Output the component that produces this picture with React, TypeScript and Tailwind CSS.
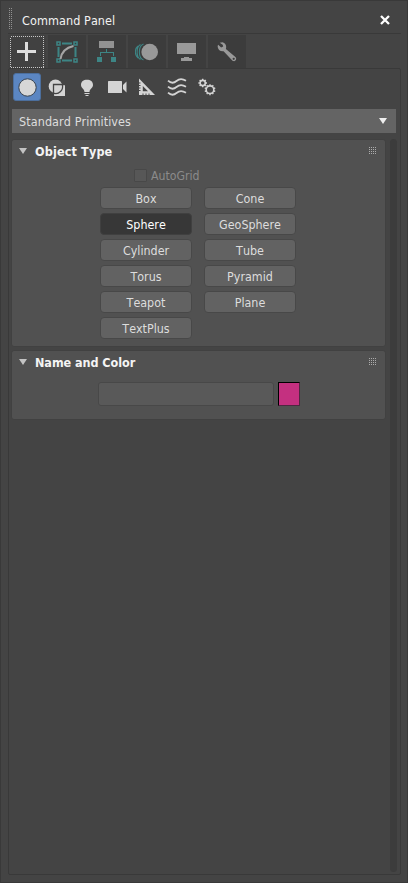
import React from "react";

const teal = "#3d8585";
const pale = "#d4d4d4";

function Grip() {
  return (
    <svg width="9" height="8" viewBox="0 0 9 8" shapeRendering="crispEdges">
      {[0, 2, 4, 6].map((y) =>
        [0, 2, 4, 6].map((x) => <rect key={`${x}-${y}`} x={x} y={y} width="1" height="1" fill="#acacac" />)
      )}
    </svg>
  );
}

function Rollout({ title, className, titleClass, children }: { title: string; className: string; titleClass: string; children: React.ReactNode }) {
  return (
    <section className={`w-[375px] rounded-[3px] border border-[#414141] bg-[#515151] ${className}`}>
      <header className="flex h-[22px] items-center pl-[7px] pr-[7px]">
        <svg width="8" height="6" viewBox="0 0 8 6"><path d="M0 0H8L4 6Z" fill="#c3c3c3" /></svg>
        <h2 className={`ml-2 pt-[2px] text-[12.5px] font-bold leading-[16px] text-[#f4f4f4] ${titleClass}`}>{title}</h2>
        <span className="ml-auto"><Grip /></span>
      </header>
      {children}
    </section>
  );
}

function Tab({ children }: { children: React.ReactNode }) {
  return <button className="flex h-[33px] w-[38px] items-center justify-center bg-[#3c3c3c]">{children}</button>;
}

function Gear({ x, y, r, n }: { x: number; y: number; r: number; n: number }) {
  return (
    <g transform={`translate(${x} ${y})`} stroke={pale} fill="none">
      <circle r={r} strokeWidth="1.6" />
      {Array.from({ length: n }, (_, i) => (
        <path key={i} d={`M0 ${-r - 0.3}V${-r - 1.7}`} strokeWidth="1.4" transform={`rotate(${(i * 360) / n})`} />
      ))}
    </g>
  );
}

const primitives = ["Box", "Cone", "Sphere", "GeoSphere", "Cylinder", "Tube", "Torus", "Pyramid", "Teapot", "Plane", "TextPlus"];

export default function App() {
  return (
    <main className="flex h-[883px] w-[408px] flex-col overflow-hidden border border-[#393939] bg-[#444444] px-[7px] pt-[2px] font-['DejaVu_Sans_Condensed','DejaVu_Sans',sans-serif] text-[12.4px] text-[#dddddd] [font-kerning:none] [font-stretch:condensed]">
      <div className="flex h-[31px] w-[393px] shrink-0 items-center border-b border-[#393939]">
        <svg className="ml-[1px]" width="4" height="21" viewBox="0 0 4 21" shapeRendering="crispEdges">
          <path d="M.5 0V21M2.5 0V21" stroke="#929292" strokeDasharray="1 1" />
        </svg>
        <h1 className="ml-[9px] mt-[5px] text-[12.5px] leading-[16px] tracking-[0.08px] text-[#f2f2f2]">Command Panel</h1>
        <button className="ml-auto mr-[11px] mt-[4px]">
          <svg width="10" height="10" viewBox="0 0 10 10"><path d="M1 1L9 9M9 1L1 9" stroke="#fff" strokeWidth="2.3" /></svg>
        </button>
      </div>

      <nav className="mt-px flex h-[33px] shrink-0 gap-[2px]">
        <div className="h-[33px] w-[38px] bg-[#414141] pl-[2px] pt-px">
          <button className="flex h-[32px] w-[34px] items-center justify-center">
            <svg width="34" height="32" viewBox="0 0 34 32" shapeRendering="crispEdges">
              <rect x=".5" y=".5" width="33" height="31" fill="none" stroke="#c7c7c7" strokeDasharray="1 1" />
              <path d="M7 14H26V17H7ZM15 6H18V25H15Z" fill="#dddddd" />
            </svg>
          </button>
        </div>
        <Tab>
          <svg width="22" height="22" viewBox="0 0 22 22" fill="none">
            <path d="M6 2.5H16M2.5 6V16M19.5 6V16M6 19.5H16" stroke={teal} strokeWidth="2" />
            <path d="M1 1H4V4H1ZM18 1H21V4H18ZM1 18H4V21H1ZM18 18H21V21H18Z" stroke={teal} strokeWidth="1.5" />
            <path d="M4.5 18Q6 7.5 17.5 5" stroke="#a5a5a5" strokeWidth="2" />
          </svg>
        </Tab>
        <Tab>
          <svg width="20" height="21" viewBox="0 0 20 21" shapeRendering="crispEdges">
            <path d="M2 0H17V7H2Z" fill="#929292" />
            <path d="M9.5 8V11M3.5 15V11.5H16.5V15" stroke={teal} fill="none" />
            <path d="M0 16H5V21H0ZM14 16H19V21H14Z" fill={teal} />
          </svg>
        </Tab>
        <Tab>
          <svg width="24" height="18" viewBox="0 0 24 18">
            <circle cx="14.7" cy="9" r="8.3" fill="#999" />
            <path d="M8.5 1C3 3 3 15 8.5 17M5.5 1.5C1 4 1 14 5.5 16.5M3 3C-.5 6 -.5 12 3 15" fill="none" stroke={teal} strokeWidth="1.1" />
          </svg>
        </Tab>
        <Tab>
          <svg width="20" height="18" viewBox="0 0 20 18" shapeRendering="crispEdges"><path d="M0 0H19V11H0ZM7 14H12V15H15V18H4V15H7Z" fill="#999" /></svg>
        </Tab>
        <Tab>
          <svg width="20" height="20" viewBox="0 0 20 20">
            <path d="M2.7 .8L5.6 .2Q9 1.2 9.2 5L8.9 7L18.7 15.3Q20.2 18.2 17.2 19.3L15.5 18.8L6.6 9.2Q.8 9.5 .6 4L1.2 2.7L4.1 5.5L6.2 4.4L5.7 2.7Z" fill="#999" />
            <circle cx="16.7" cy="16.8" r="1.1" fill="#3c3c3c" />
          </svg>
        </Tab>
      </nav>

      <div className="flex h-[807px] w-[393px] shrink-0 flex-col rounded-[2px] border border-[#393939] px-[3px]">
        <nav className="mt-[4px] flex h-[29px] shrink-0 gap-[1px]">
          <button className="ml-px flex h-[28px] w-[28px] items-center justify-center rounded-[3px] border border-[#4c6f9d] bg-[#5b86c2]">
            <svg width="20" height="20" viewBox="0 0 20 20"><circle cx="10.5" cy="10.5" r="8.7" fill="#d7d7d7" stroke="#35414f" /></svg>
          </button>
          <button className="flex w-[29px] items-center justify-center">
            <svg width="18" height="18" viewBox="0 0 18 18">
              <circle cx="7.5" cy="7.3" r="6.8" fill={pale} />
              <path d="M5.5 5.5H17V17H5.5Z" fill={pale} />
              <path d="M5.5 17.5V5.5H17.5M14.3 5.5A7 7 0 0 1 5.5 14.2" fill="none" stroke="#444" strokeWidth="1.3" />
            </svg>
          </button>
          <button className="flex w-[29px] items-center justify-center">
            <svg width="14" height="18" viewBox="0 0 14 18">
              <path d="M1 6C1 2.5 3.5 .8 7 .8S13 2.5 13 6C13 9 9.5 10 9.5 13H4.5C4.5 10 1 9 1 6Z" fill={pale} />
              <path d="M4.5 14.5H9.5M5.5 16.5H8.5" stroke={pale} />
            </svg>
          </button>
          <button className="flex w-[31px] items-center justify-center pb-px">
            <svg width="19" height="14" viewBox="0 0 19 14"><rect x="0" y="1" width="14" height="12" rx=".6" fill={pale} /><path d="M15 5L18.5 1.5V12.5L15 9Z" fill={pale} /></svg>
          </button>
          <button className="-ml-[2px] flex w-[29px] items-center justify-center pb-px">
            <svg width="18" height="18" viewBox="0 0 18 18">
              <path fillRule="evenodd" d="M1 .5L17 17H1ZM4.8 8V13.2H10Z" fill={pale} />
              <path d="M1 5H2.5M1 7.5H2.5M1 10H2.5M1 12.5H2.5M5 17V15.5M8 17V15.5M11 17V15.5" stroke="#444" />
            </svg>
          </button>
          <button className="flex w-[29px] items-center justify-center pb-px">
            <svg width="20" height="18" viewBox="0 0 20 18" fill="none" stroke={pale} strokeWidth="1.7">
              {[3, 9, 15].map((y) => (
                <path key={y} d={`M1 ${y - 0.3}C4 ${y + 2.4} 7 ${y + 2.2} 9.5 ${y}S15 ${y - 2.8} 19 ${y - 0.2}`} />
              ))}
            </svg>
          </button>
          <button className="flex w-[29px] items-center justify-center pb-[2px]">
            <svg width="18" height="18" viewBox="0 0 18 18"><Gear x={4.7} y={5} r={2.6} n={8} /><Gear x={12} y={11.7} r={3.8} n={10} /></svg>
          </button>
        </nav>

        <button className="mt-[7px] flex h-[24px] w-[384px] shrink-0 items-center bg-[#646464] pl-[7px] pr-[9px]">
          <span className="pt-[2px] text-[12.5px] leading-[16px] tracking-[0.08px]">Standard Primitives</span>
          <svg className="ml-auto" width="8" height="6" viewBox="0 0 8 6"><path d="M0 0H8L4 6Z" fill="#eeeeee" /></svg>
        </button>

        <div className="-ml-px mt-[6px] flex w-[386px] justify-between">
          <div className="flex flex-col">
            <Rollout title="Object Type" className="h-[208px]" titleClass="tracking-[0.15px]">
              <label className="ml-[122px] mt-[6px] flex h-[14px] items-center gap-[4px] text-[#8b8b8b]">
                <span className="h-[13px] w-[13px] rounded-[1px] border border-[#484848] bg-[#575757]" />
                <span className="pt-[2px] text-[12.2px] leading-[16px]">AutoGrid</span>
              </label>
              <div className="ml-[88px] mt-[5px] grid w-[196px] grid-cols-[92px_92px] gap-x-[12px] gap-y-[4px]">
                {primitives.map((name) => (
                  <button
                    key={name}
                    className={`flex h-[22px] items-center justify-center rounded-[4px] border pt-[2px] leading-[16px] ${
                      name === "Sphere" ? "border-[#404040] bg-[#373737] text-white" : "border-[#484848] bg-[#626262]"
                    }`}
                  >
                    <span>{name}</span>
                  </button>
                ))}
              </div>
            </Rollout>
            <Rollout title="Name and Color" className="mt-[3px] h-[70px]" titleClass="tracking-[-0.05px]">
              <div className="ml-[86px] mt-[9px] flex h-[24px] gap-[4px]">
                <input className="h-[24px] w-[176px] rounded-[3px] border border-[#484848] bg-[#595959] outline-none" aria-label="Name" />
                <button className="h-[24px] w-[22px] border border-b-[#4f2741] border-l-black border-r-[#4f2741] border-t-black bg-[#c43080]" aria-label="Object color" />
              </div>
            </Rollout>
          </div>
          <div className="h-[733px] w-[7px] rounded-[4px] bg-[#3c3c3c]" />
        </div>
      </div>
    </main>
  );
}
